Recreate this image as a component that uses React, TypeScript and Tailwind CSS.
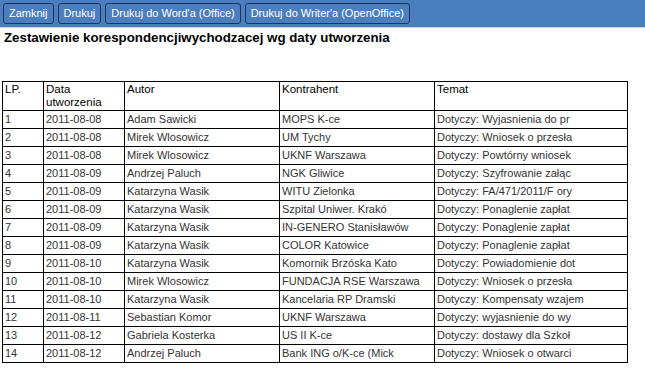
import React from 'react';

const rows = [
  ['1', '2011-08-08', 'Adam Sawicki', 'MOPS K-ce', 'Dotyczy: Wyjasnienia do pr'],
  ['2', '2011-08-08', 'Mirek Wlosowicz', 'UM Tychy', 'Dotyczy: Wniosek o przesła'],
  ['3', '2011-08-08', 'Mirek Wlosowicz', 'UKNF Warszawa', 'Dotyczy: Powtórny wniosek'],
  ['4', '2011-08-09', 'Andrzej Paluch', 'NGK Gliwice', 'Dotyczy: Szyfrowanie załąc'],
  ['5', '2011-08-09', 'Katarzyna Wasik', 'WITU Zielonka', 'Dotyczy: FA/471/2011/F ory'],
  ['6', '2011-08-09', 'Katarzyna Wasik', 'Szpital Uniwer. Krakó', 'Dotyczy: Ponaglenie zapłat'],
  ['7', '2011-08-09', 'Katarzyna Wasik', 'IN-GENERO Stanisławów', 'Dotyczy: Ponaglenie zapłat'],
  ['8', '2011-08-09', 'Katarzyna Wasik', 'COLOR Katowice', 'Dotyczy: Ponaglenie zapłat'],
  ['9', '2011-08-10', 'Katarzyna Wasik', 'Komornik Brzóska Kato', 'Dotyczy: Powiadomienie dot'],
  ['10', '2011-08-10', 'Mirek Wlosowicz', 'FUNDACJA RSE Warszawa', 'Dotyczy: Wniosek o przesła'],
  ['11', '2011-08-10', 'Katarzyna Wasik', 'Kancelaria RP Dramski', 'Dotyczy: Kompensaty wzajem'],
  ['12', '2011-08-11', 'Sebastian Komor', 'UKNF Warszawa', 'Dotyczy: wyjasnienie do wy'],
  ['13', '2011-08-12', 'Gabriela Kosterka', 'US II K-ce', 'Dotyczy: dostawy dla Szkoł'],
  ['14', '2011-08-12', 'Andrzej Paluch', 'Bank ING o/K-ce (Mick', 'Dotyczy: Wniosek o otwarci'],
];

const buttons = ['Zamknij', 'Drukuj', "Drukuj do Word'a (Office)", "Drukuj do Writer'a (OpenOffice)"];

export default function App() {
  return (
    <div className="w-[645px] h-[381px] bg-white font-['Liberation_Sans',Arial,sans-serif] text-black">
      {/* toolbar */}
      <div className="h-[28px] bg-[#4a7ebf] border-b border-[#c8d3e0] flex items-start gap-[4px] pl-[3px] pt-[3px]">
        {buttons.map((b) => (
          <button
            key={b}
            className="h-[21px] px-[5px] rounded-[3px] border border-[#1c3560] bg-[#4a7ebf] text-white text-[11px] leading-none"
          >
            {b}
          </button>
        ))}
      </div>

      <h1 className="pl-[4px] pt-[2px] text-[13.3px] font-bold leading-[16px]">
        Zestawienie korespondencjiwychodzacej wg daty utworzenia
      </h1>

      <table className="mt-[35px] ml-[2px] w-[626px] table-fixed border-collapse border border-black text-[11px] leading-[13px]">
        <colgroup>
          <col className="w-[41px]" />
          <col className="w-[81px]" />
          <col className="w-[155px]" />
          <col className="w-[155px]" />
          <col />
        </colgroup>
        <thead>
          <tr className="h-[29px]">
            {['LP.', 'Data utworzenia', 'Autor', 'Kontrahent', 'Temat'].map((h) => (
              <th key={h} className="border border-black align-top text-left font-normal px-[2px] pt-[1px] text-black text-[11.5px]">
                {h}
              </th>
            ))}
          </tr>
        </thead>
        <tbody>
          {rows.map((r) => (
            <tr key={r[0]} className="h-[18px]">
              {r.map((c, i) => (
                <td key={i} className="border border-black px-[2px] py-0 text-[#333] whitespace-nowrap overflow-hidden">
                  {c}
                </td>
              ))}
            </tr>
          ))}
        </tbody>
      </table>
    </div>
  );
}
